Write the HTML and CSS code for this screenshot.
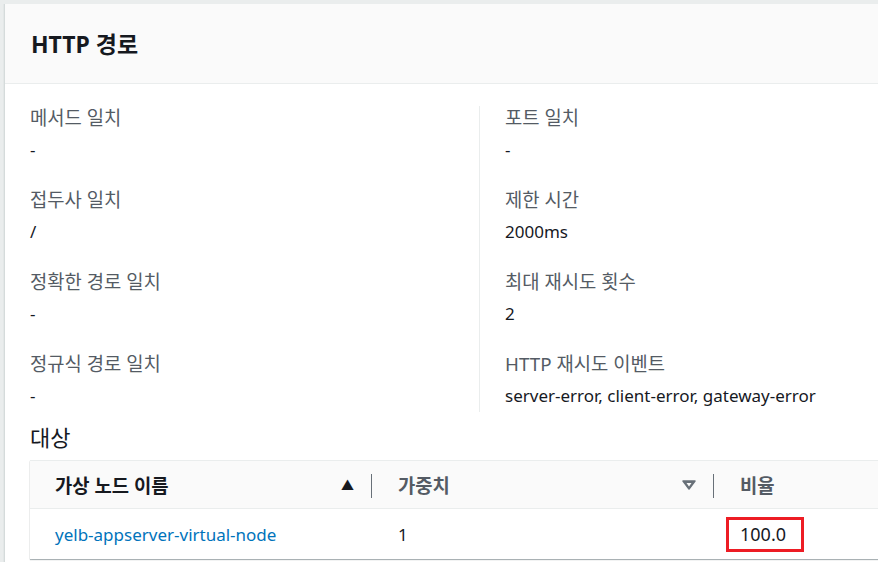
FILE: index.html
```html
<!DOCTYPE html>
<html lang="ko">
<head>
<meta charset="utf-8">
<link rel="stylesheet" href="styles.css">
</head>
<body>
<div class="card">
  <div class="card-header"><h2>HTTP 경로</h2></div>
  <div class="card-body">
    <div class="cols">
      <div class="col">
        <div class="kv"><div class="label">메서드 일치</div><div class="value">-</div></div>
        <div class="kv"><div class="label">접두사 일치</div><div class="value">/</div></div>
        <div class="kv"><div class="label">정확한 경로 일치</div><div class="value">-</div></div>
        <div class="kv"><div class="label">정규식 경로 일치</div><div class="value">-</div></div>
      </div>
      <div class="col col-right">
        <div class="kv"><div class="label">포트 일치</div><div class="value">-</div></div>
        <div class="kv"><div class="label">제한 시간</div><div class="value">2000ms</div></div>
        <div class="kv"><div class="label">최대 재시도 횟수</div><div class="value">2</div></div>
        <div class="kv"><div class="label">HTTP 재시도 이벤트</div><div class="value">server-error, client-error, gateway-error</div></div>
      </div>
    </div>
    <h3 class="section-title">대상</h3>
    <div class="table">
      <div class="thead">
        <div class="th th-name"><span>가상 노드 이름</span><span class="sort up">&#9650;</span></div>
        <div class="th th-weight"><span>가중치</span><span class="sort down"><svg width="14" height="10" viewBox="0 0 14 10"><path d="M1 1 H13 L7 9 Z" fill="#687078" stroke="#687078" stroke-width="1.5" stroke-linejoin="round"/><path d="M4.5 3 H9.5 L7 6.5 Z" fill="#fafafa"/></svg></span></div>
        <div class="th th-ratio"><span>비율</span></div>
      </div>
      <div class="trow">
        <div class="td td-name"><a href="#">yelb-appserver-virtual-node</a></div>
        <div class="td td-weight">1</div>
        <div class="td td-ratio"><span class="highlight">100.0</span></div>
      </div>
    </div>
  </div>
</div>
</body>
</html>
```
FILE: styles.css
```css
* { box-sizing: border-box; }
html, body { margin: 0; padding: 0; }
body {
  background: #eaeded;
  font-family: "Noto Sans", "Noto Sans CJK KR", sans-serif;
  color: #16191f;
  padding: 4px 0 0 4px;
  overflow: hidden;
  width: 878px;
  height: 562px;
}
.card {
  background: #fff;
  width: 900px;
  min-height: 600px;
  border-left: 1px solid #d5dbdb;
  box-shadow: -1px 0 0 #e3e7e7;
}
.card-header {
  background: #fafafa;
  height: 80px;
  border-bottom: 1px solid #eaeded;
  display: flex;
  align-items: center;
  padding-left: 26px;
}
.card-header h2 {
  margin: 0;
  font-size: 23px;
  font-weight: 700;
  color: #16191f;
  padding-bottom: 2px;
}
.card-body {
  padding: 22px 0 0 25px;
}
.cols {
  display: flex;
}
.col {
  width: 449px;
  flex-shrink: 0;
}
.col-right {
  border-left: 1px solid #eaeded;
  padding-left: 25px;
  width: 420px;
}
.kv {
  height: 82px;
}
.label {
  font-size: 18.8px;
  color: #545b64;
  line-height: 24px;
  height: 24px;
}
.value {
  font-size: 17px;
  color: #16191f;
  line-height: 24px;
  margin-top: 8px;
}
.kv:last-child { height: 60px; }
.section-title {
  margin: 11px 0 0 0;
  font-size: 22px;
  font-weight: 400;
  line-height: 28px;
  color: #16191f;
}
.table {
  margin-top: 9px;
  width: 900px;
  background: #fff;
  box-shadow: 0 1px 1px rgba(0,28,36,0.3), 1px 1px 1px -1px rgba(0,28,36,0.15), -1px 1px 1px -1px rgba(0,28,36,0.15);
  border-top: 1px solid #eaeded;
}
.thead {
  display: flex;
  background: #fafafa;
  height: 48px;
  border-bottom: 1px solid #eaeded;
  align-items: center;
}
.th {
  font-size: 18.8px;
  font-weight: 700;
  color: #545b64;
  display: flex;
  align-items: center;
  justify-content: space-between;
  height: 100%;
  position: relative;
}
.th-name { width: 342px; padding: 0 18px 0 25px; color: #16191f; }
.th-weight { width: 342px; padding: 0 18px 0 26px; }
.th-ratio { padding-left: 26px; }
.th-name::after, .th-weight::after {
  content: "";
  position: absolute;
  right: 0;
  top: 13px;
  height: 24px;
  border-left: 1px solid #687078;
}
.sort.up { font-size: 13px; color: #16191f; }
.sort.down { display: flex; align-items: center; }
.trow {
  display: flex;
  height: 50px;
  align-items: center;
}
.td { font-size: 17px; }
.td-name { width: 342px; padding-left: 25px; }
.td-weight { width: 342px; padding-left: 26px; }
.td-ratio { padding-left: 12px; }
.td-name a { color: #0073bb; text-decoration: none; }
.highlight {
  display: inline-block;
  border: 3px solid #ed1c24;
  padding: 3px 15px 3px 11px;
  line-height: 23px;
  font-size: 18px;
}
```
